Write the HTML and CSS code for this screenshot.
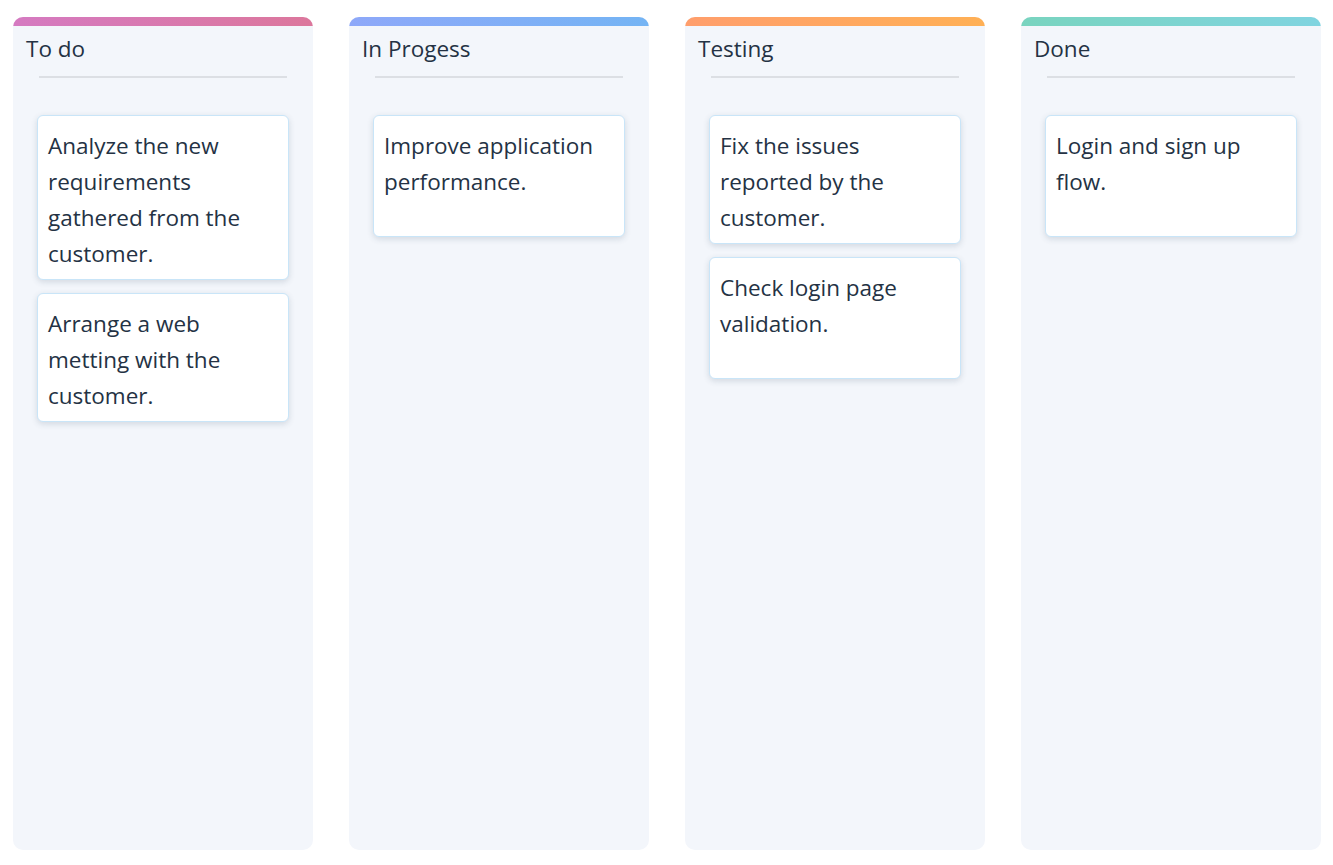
FILE: index.html
```html
<!DOCTYPE html>
<html lang="en">
<head>
<meta charset="utf-8">
<title>Kanban</title>
<link rel="stylesheet" href="styles.css">
</head>
<body>
<div class="board">
  <section class="column todo">
    <div class="bar"></div>
    <h2 class="title">To do</h2>
    <hr class="divider">
    <div class="cards">
      <div class="card">Analyze the new requirements gathered from the customer.</div>
      <div class="card">Arrange a web metting with the customer.</div>
    </div>
  </section>
  <section class="column progress">
    <div class="bar"></div>
    <h2 class="title">In Progess</h2>
    <hr class="divider">
    <div class="cards">
      <div class="card">Improve application performance.</div>
    </div>
  </section>
  <section class="column testing">
    <div class="bar"></div>
    <h2 class="title">Testing</h2>
    <hr class="divider">
    <div class="cards">
      <div class="card">Fix the issues reported by the customer.</div>
      <div class="card">Check login page validation.</div>
    </div>
  </section>
  <section class="column done">
    <div class="bar"></div>
    <h2 class="title">Done</h2>
    <hr class="divider">
    <div class="cards">
      <div class="card">Login and sign up flow.</div>
    </div>
  </section>
</div>
</body>
</html>
```
FILE: styles.css
```css
html, body {
  margin: 0;
  padding: 0;
  background: #ffffff;
}
body {
  font-family: "Open Sans", "Noto Sans", "Liberation Sans", sans-serif;
  color: #243244;
}
.board {
  display: flex;
  gap: 36px;
  padding: 17px 12px 0 13px;
}
.column {
  width: 300px;
  height: 833px;
  flex: none;
  background: #f3f6fb;
  border-radius: 10px;
  overflow: hidden;
  display: flex;
  flex-direction: column;
}
.bar {
  height: 9px;
  flex: none;
}
.todo .bar { background: linear-gradient(90deg, #d57ac1, #dc779c); }
.progress .bar { background: linear-gradient(90deg, #8ea8f9, #74b4f4); }
.testing .bar { background: linear-gradient(90deg, #ff9e6c, #ffb055); }
.done .bar { background: linear-gradient(90deg, #79d4bf, #80d4e0); }
.title {
  margin: 0;
  padding: 8px 13px 0;
  font-size: 22.5px;
  font-weight: 400;
  line-height: 30px;
  color: #243244;
}
.divider {
  margin: 12px 26px 0;
  border: 0;
  height: 2px;
  background: #dcdfe4;
}
.cards {
  display: flex;
  flex-direction: column;
  gap: 13px;
  padding: 37px 24px 0;
}
.card {
  box-sizing: border-box;
  min-height: 122px;
  background: #ffffff;
  border: 1px solid #c9e5f8;
  border-radius: 6px;
  box-shadow: 0 2px 6px rgba(40, 60, 90, 0.16);
  padding: 12px 10px 7px;
  font-size: 22.5px;
  line-height: 36px;
  color: #243244;
}
```
